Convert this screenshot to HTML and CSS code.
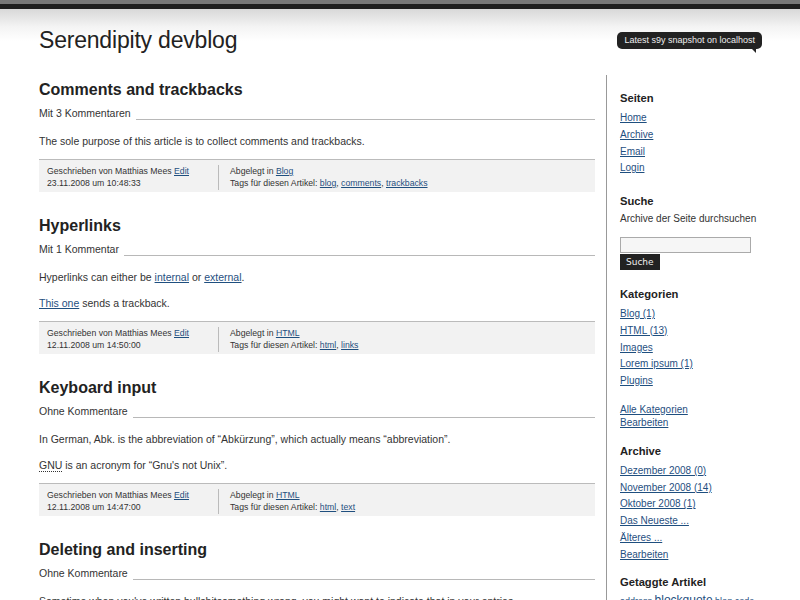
FILE: index.html
```html
<!DOCTYPE html>
<html lang="de">
<head>
<meta charset="utf-8">
<title>Serendipity devblog</title>
<link rel="stylesheet" href="styles.css">
</head>
<body>
<div class="topbar"></div>
<div class="page">
  <header class="header">
    <h1 class="site-title">Serendipity devblog</h1>
    <div class="badge">Latest s9y snapshot on localhost</div>
  </header>
  <div class="layout">
    <main class="main">
      <article class="entry">
        <h2 class="entry-title">Comments and trackbacks</h2>
        <div class="entry-meta"><span>Mit 3 Kommentaren</span><span class="rule"></span></div>
        <p>The sole purpose of this article is to collect comments and trackbacks.</p>
        <div class="entry-footer">
          <div class="col-left">Geschrieben von Matthias Mees <a href="#">Edit</a><br>23.11.2008 um 10:48:33</div>
          <div class="col-right">Abgelegt in <a href="#">Blog</a><br>Tags für diesen Artikel: <a href="#">blog</a>, <a href="#">comments</a>, <a href="#">trackbacks</a></div>
        </div>
      </article>
      <article class="entry">
        <h2 class="entry-title">Hyperlinks</h2>
        <div class="entry-meta"><span>Mit 1 Kommentar</span><span class="rule"></span></div>
        <p>Hyperlinks can either be <a href="#">internal</a> or <a href="#">external</a>.</p>
        <p><a href="#">This one</a> sends a trackback.</p>
        <div class="entry-footer">
          <div class="col-left">Geschrieben von Matthias Mees <a href="#">Edit</a><br>12.11.2008 um 14:50:00</div>
          <div class="col-right">Abgelegt in <a href="#">HTML</a><br>Tags für diesen Artikel: <a href="#">html</a>, <a href="#">links</a></div>
        </div>
      </article>
      <article class="entry">
        <h2 class="entry-title">Keyboard input</h2>
        <div class="entry-meta"><span>Ohne Kommentare</span><span class="rule"></span></div>
        <p>In German, Abk. is the abbreviation of “Abkürzung”, which actually means “abbreviation”.</p>
        <p><abbr title="Gnu's not Unix">GNU</abbr> is an acronym for “Gnu's not Unix”.</p>
        <div class="entry-footer">
          <div class="col-left">Geschrieben von Matthias Mees <a href="#">Edit</a><br>12.11.2008 um 14:47:00</div>
          <div class="col-right">Abgelegt in <a href="#">HTML</a><br>Tags für diesen Artikel: <a href="#">html</a>, <a href="#">text</a></div>
        </div>
      </article>
      <article class="entry">
        <h2 class="entry-title">Deleting and inserting</h2>
        <div class="entry-meta"><span>Ohne Kommentare</span><span class="rule"></span></div>
        <p>Sometime when you've written bullshitsomething wrong, you might want to indicate that in your entries.</p>
      </article>
    </main>
    <aside class="sidebar">
      <section class="widget">
        <h3 class="widget-title">Seiten</h3>
        <ul class="links">
          <li><a href="#">Home</a></li>
          <li><a href="#">Archive</a></li>
          <li><a href="#">Email</a></li>
          <li><a href="#">Login</a></li>
        </ul>
      </section>
      <section class="widget">
        <h3 class="widget-title">Suche</h3>
        <div class="search-label">Archive der Seite durchsuchen</div>
        <form class="search">
          <input class="search-input" type="text">
          <button class="search-btn" type="button">Suche</button>
        </form>
      </section>
      <section class="widget">
        <h3 class="widget-title">Kategorien</h3>
        <ul class="links">
          <li><a href="#">Blog (1)</a></li>
          <li><a href="#">HTML (13)</a></li>
          <li><a href="#">Images</a></li>
          <li><a href="#">Lorem ipsum (1)</a></li>
          <li><a href="#">Plugins</a></li>
        </ul>
        <div class="extra"><a href="#">Alle Kategorien</a><br><a href="#">Bearbeiten</a></div>
      </section>
      <section class="widget widget-archive">
        <h3 class="widget-title">Archive</h3>
        <ul class="links">
          <li><a href="#">Dezember 2008 (0)</a></li>
          <li><a href="#">November 2008 (14)</a></li>
          <li><a href="#">Oktober 2008 (1)</a></li>
          <li><a href="#">Das Neueste ...</a></li>
          <li><a href="#">Älteres ...</a></li>
          <li><a href="#">Bearbeiten</a></li>
        </ul>
      </section>
      <section class="widget">
        <h3 class="widget-title">Getaggte Artikel</h3>
        <div class="tags"><a href="#" class="t1">address</a> <a href="#" class="t3">blockquote</a> <a href="#" class="t1">blog</a> <a href="#" class="t1">code</a></div>
      </section>
    </aside>
  </div>
</div>
</body>
</html>
```

FILE: styles.css
```css
html, body {
  margin: 0;
  padding: 0;
}
body {
  font-family: "Liberation Sans", Arial, sans-serif;
  color: #333;
  background: #fff;
  overflow: hidden;
}
a {
  color: #1f4f7f;
  text-decoration: underline;
}
.topbar {
  height: 4px;
  background: #777;
  border-bottom: 5px solid #1e1e1e;
}
.page {
  background: linear-gradient(#d8d8d8, #f4f4f4 18px, #fff 32px);
  padding: 0 38px 0 39px;
}
.header {
  display: flex;
  justify-content: space-between;
  align-items: flex-start;
  height: 66px;
}
.site-title {
  margin: 17px 0 0;
  font-weight: normal;
  font-size: 23px;
  line-height: 28px;
  color: #222;
  letter-spacing: -0.2px;
}
.badge {
  position: relative;
  margin-top: 23px;
  background: #222;
  color: #eee;
  font-size: 9px;
  line-height: 17px;
  padding: 0 7px;
  border-radius: 5px;
}
.badge::after {
  content: "";
  position: absolute;
  right: 6px;
  bottom: -4px;
  border-left: 4px solid transparent;
  border-top: 4px solid #222;
}
.layout {
  display: flex;
}
.main {
  width: 556px;
  flex: none;
}
.entry {
  margin-bottom: 23px;
}
.entry-title {
  margin: 4px 0 0;
  font-size: 16px;
  line-height: 22px;
  color: #222;
}
.entry-meta {
  display: flex;
  align-items: baseline;
  font-size: 10.5px;
  line-height: 14px;
  margin-top: 5px;
  color: #333;
}
.entry-meta .rule {
  flex: 1;
  margin-left: 5px;
  border-bottom: 1px solid #b8b8b8;
  position: relative;
  top: 3px;
}
.entry p {
  font-size: 10.5px;
  line-height: 14px;
  margin: 12px 0 0;
}
.entry .entry-meta + p {
  margin-top: 14px;
}
abbr {
  text-decoration: none;
  border-bottom: 1px dotted #333;
}
.entry-footer {
  display: flex;
  margin-top: 11px;
  background: #f2f2f2;
  border-top: 1px solid #bbb;
  padding: 5px 8px 2px;
  font-size: 8.7px;
  line-height: 12px;
  color: #333;
}
.col-left {
  width: 171px;
  flex: none;
  padding-bottom: 1px;
}
.col-right {
  border-left: 1px solid #bbb;
  padding-left: 11px;
}
.sidebar {
  margin-left: 11px;
  border-left: 1px solid #999;
  padding: 15px 0 40px 13px;
  flex: 1;
}
.widget {
  margin-bottom: 16px;
}
.widget-archive {
  margin-bottom: 11px;
}
.widget-title {
  margin: 0;
  font-size: 11.2px;
  line-height: 16px;
  color: #222;
}
.links {
  list-style: none;
  margin: 4px 0 0;
  padding: 0;
  font-size: 10px;
  line-height: 16.75px;
}
.extra {
  margin-top: 13px;
  margin-bottom: -2px;
  font-size: 10px;
  line-height: 13px;
}
.search-label {
  font-size: 10px;
  line-height: 16px;
  margin-top: 2px;
}
.search {
  margin-top: 10px;
  display: flex;
  flex-direction: column;
  align-items: flex-start;
}
.search-input {
  width: 131px;
  height: 16px;
  box-sizing: border-box;
  border: 1px solid #aaa;
  background: #f6f6f6;
  margin: 0;
  padding: 0;
}
.search-btn {
  margin-top: 1px;
  background: #222;
  color: #eee;
  border: none;
  font-family: "DejaVu Sans", sans-serif;
  font-size: 9px;
  height: 16px;
  padding: 0 6px;
}
.tags {
  margin-top: 2px;
  font-size: 9px;
  line-height: 16px;
  white-space: nowrap;
}
.tags .t3 {
  font-size: 12px;
}
```
